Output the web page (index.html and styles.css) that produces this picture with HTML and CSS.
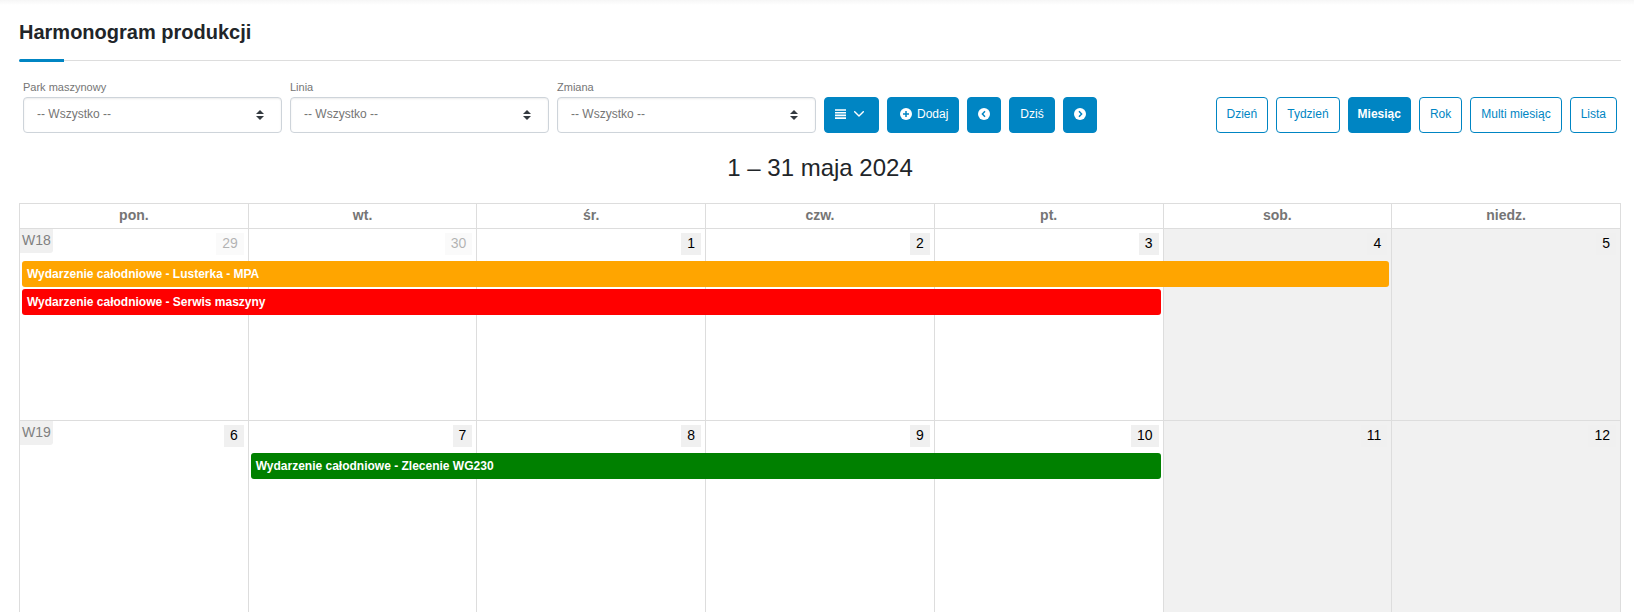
FILE: index.html
```html
<!DOCTYPE html>
<html lang="pl">
<head>
<meta charset="utf-8">
<meta name="viewport" content="width=device-width, initial-scale=1">
<title>Harmonogram produkcji</title>
<link rel="stylesheet" href="styles.css">
</head>
<body>
<main class="page">
  <header class="page-header">
    <h1 class="page-title">Harmonogram produkcji</h1>
  </header>

  <div class="toolbar">
    <div class="filters">
      <div class="field">
        <label class="field-label" for="park">Park maszynowy</label>
        <div class="select-wrap">
          <select class="select" id="park"><option>-- Wszystko --</option></select>
          <svg class="select-arrow" viewBox="0 0 8 10" aria-hidden="true"><path d="M4 0 8 4H0zM4 10 0 6h8z"/></svg>
        </div>
      </div>
      <div class="field">
        <label class="field-label" for="linia">Linia</label>
        <div class="select-wrap">
          <select class="select" id="linia"><option>-- Wszystko --</option></select>
          <svg class="select-arrow" viewBox="0 0 8 10" aria-hidden="true"><path d="M4 0 8 4H0zM4 10 0 6h8z"/></svg>
        </div>
      </div>
      <div class="field">
        <label class="field-label" for="zmiana">Zmiana</label>
        <div class="select-wrap">
          <select class="select" id="zmiana"><option>-- Wszystko --</option></select>
          <svg class="select-arrow" viewBox="0 0 8 10" aria-hidden="true"><path d="M4 0 8 4H0zM4 10 0 6h8z"/></svg>
        </div>
      </div>
      <button class="btn btn-primary btn-menu" type="button" aria-label="Menu">
        <svg width="11" height="10" viewBox="0 0 11 10" aria-hidden="true"><path d="M0 1h11M0 3.700h11M0 6.400h11M0 9.100h11" stroke="currentColor" stroke-width="1.600"/></svg>
        <svg width="10" height="6" viewBox="0 0 10 6" aria-hidden="true"><path d="M.7.700 5 5 9.300.7" fill="none" stroke="currentColor" stroke-width="1.400" stroke-linecap="round" stroke-linejoin="round"/></svg>
      </button>
      <button class="btn btn-primary btn-add" type="button">
        <svg width="12" height="12" viewBox="0 0 12 12" aria-hidden="true"><circle cx="6" cy="6" r="6" fill="currentColor"/><path class="cut" d="M6 3v6M3 6h6" stroke-width="1.500"/></svg>
        Dodaj
      </button>
      <button class="btn btn-primary" type="button" aria-label="Poprzedni">
        <svg width="12" height="12" viewBox="0 0 12 12" aria-hidden="true"><circle cx="6" cy="6" r="6" fill="currentColor"/><path class="cut" d="M7 3.200 4.400 6 7 8.800" stroke-width="1.500"/></svg>
      </button>
      <button class="btn btn-primary" type="button">Dziś</button>
      <button class="btn btn-primary" type="button" aria-label="Następny">
        <svg width="12" height="12" viewBox="0 0 12 12" aria-hidden="true"><circle cx="6" cy="6" r="6" fill="currentColor"/><path class="cut" d="M5 3.200 7.600 6 5 8.800" stroke-width="1.500"/></svg>
      </button>
    </div>
    <div class="views">
      <button class="btn btn-outline" type="button">Dzień</button>
      <button class="btn btn-outline" type="button">Tydzień</button>
      <button class="btn btn-primary btn-active" type="button" aria-pressed="true">Miesiąc</button>
      <button class="btn btn-outline" type="button">Rok</button>
      <button class="btn btn-outline" type="button">Multi miesiąc</button>
      <button class="btn btn-outline" type="button">Lista</button>
    </div>
  </div>

  <h2 class="range">1 – 31 maja 2024</h2>

  <table class="calendar">
    <thead>
      <tr><th>pon.</th><th>wt.</th><th>śr.</th><th>czw.</th><th>pt.</th><th>sob.</th><th>niedz.</th></tr>
    </thead>
    <tbody>
      <tr>
        <td>
          <div class="day-top"><span class="week">W18</span><span class="day day-other">29</span></div>
          <div class="event event-orange" style="--span:6">Wydarzenie całodniowe - Lusterka - MPA</div>
          <div class="event event-red" style="--span:5">Wydarzenie całodniowe - Serwis maszyny</div>
        </td>
        <td><div class="day-top"><span class="day day-other">30</span></div></td>
        <td><div class="day-top"><span class="day">1</span></div></td>
        <td><div class="day-top"><span class="day">2</span></div></td>
        <td><div class="day-top"><span class="day">3</span></div></td>
        <td class="weekend"><div class="day-top"><span class="day">4</span></div></td>
        <td class="weekend"><div class="day-top"><span class="day">5</span></div></td>
      </tr>
      <tr>
        <td><div class="day-top"><span class="week">W19</span><span class="day">6</span></div></td>
        <td>
          <div class="day-top"><span class="day">7</span></div>
          <div class="event event-green" style="--span:4">Wydarzenie całodniowe - Zlecenie WG230</div>
        </td>
        <td><div class="day-top"><span class="day">8</span></div></td>
        <td><div class="day-top"><span class="day">9</span></div></td>
        <td><div class="day-top"><span class="day">10</span></div></td>
        <td class="weekend"><div class="day-top"><span class="day">11</span></div></td>
        <td class="weekend"><div class="day-top"><span class="day">12</span></div></td>
      </tr>
    </tbody>
  </table>
</main>
</body>
</html>
```
FILE: styles.css
```css
:root {
  --blue: #0085c3;
  --line: #ddd;
}

* { box-sizing: border-box; }

body {
  margin: 0;
  height: 100vh;
  overflow: hidden;
  background: #fff;
  color: #212529;
  font-family: "Liberation Sans", Arial, sans-serif;
  font-size: 12px;
}

.page {
  padding: 16px 13px 0 19px;
  background: linear-gradient(#f6f6f6, #fff) 0 0 / 100% 5px no-repeat;
}

.page-header {
  display: flex;
  flex-direction: column;
  gap: 11px;
}

.page-title {
  margin: 0;
  font-size: 20px;
  line-height: 32px;
  font-weight: 700;
}

.page-header::after {
  content: "";
  height: 3px;
  background:
    linear-gradient(var(--blue), var(--blue)) 0 0 / 45px 3px no-repeat,
    linear-gradient(var(--line), var(--line)) 0 1px / 100% 1px no-repeat;
  border-radius: 2px;
}

.toolbar {
  display: flex;
  justify-content: space-between;
  align-items: flex-end;
  padding: 18px 4px 0;
}

.filters,
.views {
  display: flex;
  align-items: flex-end;
  gap: 8px;
}

.field {
  display: flex;
  flex-direction: column;
  gap: 3px;
}

.field-label {
  font-size: 11px;
  line-height: 14px;
  color: #757575;
}

.select-wrap {
  position: relative;
  width: 259px;
}

.select {
  display: block;
  width: 100%;
  height: 36px;
  padding: 0 32px 2px 13px;
  appearance: none;
  border: 1px solid #ced4da;
  border-radius: 4px;
  background: #fff;
  box-shadow: inset 0 1px 2px rgba(0, 0, 0, .08);
  color: #757575;
  font: inherit;
}

.select-arrow {
  position: absolute;
  right: 18px;
  top: 13px;
  width: 8px;
  height: 10px;
  fill: #343a40;
  pointer-events: none;
}

.btn {
  display: flex;
  align-items: center;
  justify-content: center;
  height: 36px;
  padding: 0 10px 2px;
  border: 1px solid var(--blue);
  border-radius: 4px;
  font: inherit;
  white-space: nowrap;
}

.btn-primary {
  background: var(--blue);
  color: #fff;
}

.btn-outline {
  background: #fff;
  color: var(--blue);
}

.btn-active {
  padding-left: 9px;
  padding-right: 9px;
  font-weight: 700;
}

.btn-menu { gap: 8px; padding-right: 14px; }

.btn-add { gap: 5px; padding-left: 12px; }

.cut {
  fill: none;
  stroke: var(--blue);
}

.range {
  margin: 20px 0 21px;
  font-size: 24px;
  line-height: 29px;
  font-weight: 400;
  text-align: center;
}

.calendar {
  width: 100%;
  table-layout: fixed;
  border-collapse: collapse;
}

.calendar th,
.calendar td {
  padding: 0;
  border: 1px solid var(--line);
}

.calendar th {
  height: 25px;
  padding-bottom: 2px;
  font-size: 14px;
  line-height: 20px;
  color: #757575;
}

.calendar td {
  height: 192px;
  vertical-align: top;
}

.calendar .weekend { background: #f1f1f1; }

.day-top {
  display: flex;
  align-items: flex-start;
  height: 32px;
  font-size: 14px;
}

.week {
  padding: 2px 2px 4px;
  line-height: 18px;
  border-radius: 0 0 3px 0;
  background: #f0f0f0;
  color: #808080;
}

.day {
  margin: 4px 4px 0 auto;
  padding: 0 6px 2px;
  line-height: 20px;
  background: #f0f0f0;
  color: #000;
}

.day-other { opacity: .3; }

.event {
  position: relative;
  z-index: 1;
  width: calc((100% + 1px) * var(--span) - 5px);
  margin: 0 0 2px 2px;
  padding: 0 5px;
  border-radius: 3px;
  color: #fff;
  font-weight: 700;
  line-height: 26px;
  white-space: nowrap;
}

.event-orange { background: #ffa500; }
.event-red { background: #f00; }
.event-green { background: #008000; }
```
